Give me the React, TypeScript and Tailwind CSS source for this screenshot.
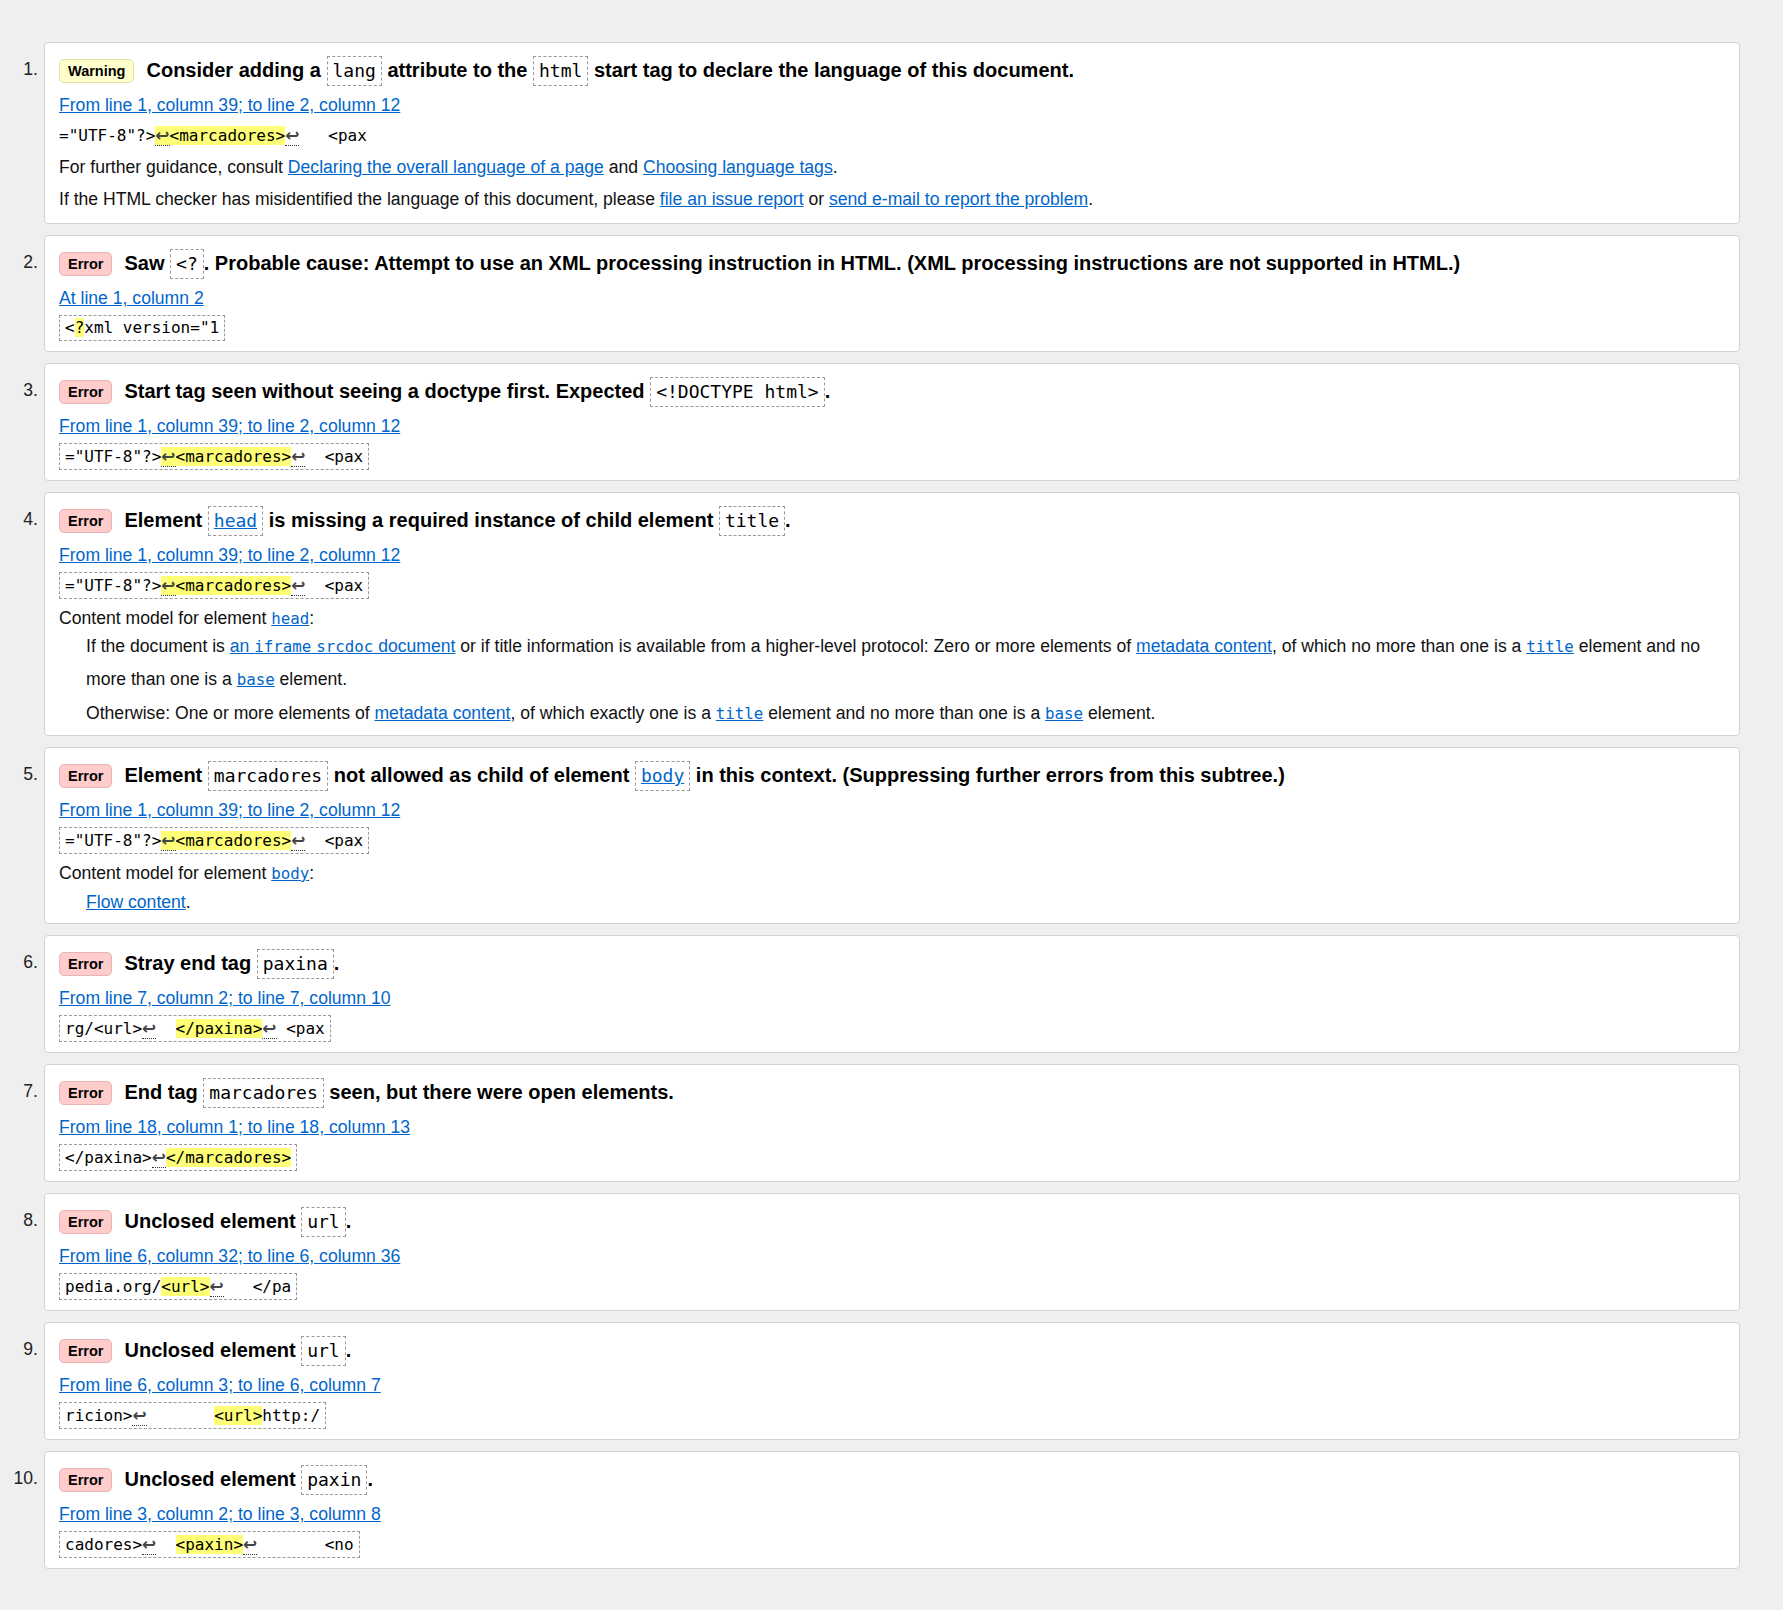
import type { ReactNode } from "react";

const sans = "font-['Liberation_Sans',Arial,sans-serif]";
const mono = "font-['DejaVu_Sans_Mono','Liberation_Mono',monospace]";
const link = "text-[#0066cc] underline";

function Badge({ kind }: { kind: "Warning" | "Error" }) {
  const tone =
    kind === "Warning"
      ? "bg-[#ffffcc] border-[#e3e3a6]"
      : "bg-[#ffcccc] border-[#eab4b4]";
  return (
    <span
      className={`inline-block align-[1px] rounded-[5px] border px-[8px] text-[14.5px] leading-[22px] font-bold text-black mr-[12px] ${tone}`}
    >
      {kind}
    </span>
  );
}

// dashed box round a tag name in a message title
function TCode({ children, href }: { children: ReactNode; href?: boolean }) {
  return (
    <code
      className={`inline-block border border-dashed border-[#9a9a9a] px-[5px] py-[2px] leading-[24px] text-[18px] font-normal ${mono} ${href ? link : "text-black"}`}
    >
      {children}
    </code>
  );
}

function Lf() {
  return (
    <span className="font-['DejaVu_Sans',sans-serif] text-[17px] font-bold text-[#444] border-b border-dotted border-[#333]">
      ↩
    </span>
  );
}

function Hl({ children }: { children: ReactNode }) {
  return <span className="bg-[#ffff77]">{children}</span>;
}

// link set in monospace (element names in prose)
function CLink({ children }: { children: ReactNode }) {
  return <a className={`${link} ${mono} text-[15.8px]`}>{children}</a>;
}

type CardProps = {
  n: number;
  kind: "Warning" | "Error";
  title: ReactNode;
  where: string;
  extract: ReactNode;
  boxed?: boolean;
  children?: ReactNode;
};

function Card({ n, kind, title, where, extract, boxed = true, children }: CardProps) {
  return (
    <li className="flex">
      <div className="w-[44px] shrink-0 pt-[12px] pr-[6px] text-right text-[17.6px] leading-[30px] text-[#222]">
        {n}.
      </div>
      <div className="flex-1 rounded-[4px] border border-[#d2d2d2] bg-white px-[14px] pt-[12px] pb-[10px]">
        <p className="text-[20px] leading-[30px] font-bold text-black">
          <Badge kind={kind} />
          {title}
        </p>
        <p className="mt-[5px] text-[17.6px] leading-[28px]">
          <a className={link}>{where}</a>
        </p>
        <div className="mt-[3px]">
          <code
            className={`inline-block text-[16px] leading-[20px] whitespace-pre text-black ${mono} ${boxed ? "border border-dashed border-[#9a9a9a] px-[5px] py-[2px]" : "py-[3px]"}`}
          >
            {extract}
          </code>
        </div>
        {children}
      </div>
    </li>
  );
}

const marcExtract = (
  <>
    ="UTF-8"?&gt;
    <Hl>
      <Lf />
      &lt;marcadores&gt;
    </Hl>
    <Lf />
    {"  "}&lt;pax
  </>
);

export default function App() {
  return (
    <div className={`min-h-screen bg-[#efefef] pt-[42px] pr-[43px] pb-[40px] text-[#111] ${sans}`}>
      <ol className="flex flex-col gap-[11px]">
        <Card
          n={1}
          kind="Warning"
          boxed={false}
          title={
            <>
              Consider adding a <TCode>lang</TCode> attribute to the <TCode>html</TCode> start tag to declare the
              language of this document.
            </>
          }
          where="From line 1, column 39; to line 2, column 12"
          extract={
            <>
              ="UTF-8"?&gt;
              <Hl>
                <Lf />
                &lt;marcadores&gt;
              </Hl>
              <Lf />
              {"   "}&lt;pax
            </>
          }
        >
          <p className="mt-[4px] text-[17.6px] leading-[28px]">
            For further guidance, consult <a className={link}>Declaring the overall language of a page</a> and{" "}
            <a className={link}>Choosing language tags</a>.
          </p>
          <p className="mt-[4px] text-[17.6px] leading-[28px]">
            If the HTML checker has misidentified the language of this document, please{" "}
            <a className={link}>file an issue report</a> or <a className={link}>send e-mail to report the problem</a>.
          </p>
        </Card>

        <Card
          n={2}
          kind="Error"
          title={
            <>
              Saw <TCode>&lt;?</TCode>. Probable cause: Attempt to use an XML processing instruction in HTML. (XML
              processing instructions are not supported in HTML.)
            </>
          }
          where="At line 1, column 2"
          extract={
            <>
              &lt;<Hl>?</Hl>xml version="1
            </>
          }
        />

        <Card
          n={3}
          kind="Error"
          title={
            <>
              Start tag seen without seeing a doctype first. Expected <TCode>&lt;!DOCTYPE html&gt;</TCode>.
            </>
          }
          where="From line 1, column 39; to line 2, column 12"
          extract={marcExtract}
        />

        <Card
          n={4}
          kind="Error"
          title={
            <>
              Element <TCode href>head</TCode> is missing a required instance of child element <TCode>title</TCode>.
            </>
          }
          where="From line 1, column 39; to line 2, column 12"
          extract={marcExtract}
        >
          <p className="mt-[5px] text-[17.6px] leading-[28px]">
            Content model for element <CLink>head</CLink>:
          </p>
          <div className="ml-[27px] mt-[-3px] mb-[-5px] text-[17.6px] leading-[32px]">
            <p>
              If the document is <a className={link}>an </a>
              <CLink>iframe</CLink>
              <a className={link}> </a>
              <CLink>srcdoc</CLink>
              <a className={link}> document</a> or if title information is available from a higher-level protocol:
              Zero or more elements of <a className={link}>metadata content</a>, of which no more than one is a{" "}
              <CLink>title</CLink> element and no
              <br />
              more than one is a <CLink>base</CLink> element.
            </p>
            <p className="mt-[1px]">
              Otherwise: One or more elements of <a className={link}>metadata content</a>, of which exactly one is a{" "}
              <CLink>title</CLink> element and no more than one is a <CLink>base</CLink> element.
            </p>
          </div>
        </Card>

        <Card
          n={5}
          kind="Error"
          title={
            <>
              Element <TCode>marcadores</TCode> not allowed as child of element <TCode href>body</TCode> in this
              context. (Suppressing further errors from this subtree.)
            </>
          }
          where="From line 1, column 39; to line 2, column 12"
          extract={marcExtract}
        >
          <p className="mt-[5px] text-[17.6px] leading-[28px]">
            Content model for element <CLink>body</CLink>:
          </p>
          <p className="ml-[27px] mb-[-3px] text-[17.6px] leading-[28px]">
            <a className={link}>Flow content</a>.
          </p>
        </Card>

        <Card
          n={6}
          kind="Error"
          title={
            <>
              Stray end tag <TCode>paxina</TCode>.
            </>
          }
          where="From line 7, column 2; to line 7, column 10"
          extract={
            <>
              rg/&lt;url&gt;
              <Lf />
              {"  "}
              <Hl>&lt;/paxina&gt;</Hl>
              <Lf />
              {" "}&lt;pax
            </>
          }
        />

        <Card
          n={7}
          kind="Error"
          title={
            <>
              End tag <TCode>marcadores</TCode> seen, but there were open elements.
            </>
          }
          where="From line 18, column 1; to line 18, column 13"
          extract={
            <>
              &lt;/paxina&gt;
              <Lf />
              <Hl>&lt;/marcadores&gt;</Hl>
            </>
          }
        />

        <Card
          n={8}
          kind="Error"
          title={
            <>
              Unclosed element <TCode>url</TCode>.
            </>
          }
          where="From line 6, column 32; to line 6, column 36"
          extract={
            <>
              pedia.org/<Hl>&lt;url&gt;</Hl>
              <Lf />
              {"   "}&lt;/pa
            </>
          }
        />

        <Card
          n={9}
          kind="Error"
          title={
            <>
              Unclosed element <TCode>url</TCode>.
            </>
          }
          where="From line 6, column 3; to line 6, column 7"
          extract={
            <>
              ricion&gt;
              <Lf />
              {"       "}
              <Hl>&lt;url&gt;</Hl>http:/
            </>
          }
        />

        <Card
          n={10}
          kind="Error"
          title={
            <>
              Unclosed element <TCode>paxin</TCode>.
            </>
          }
          where="From line 3, column 2; to line 3, column 8"
          extract={
            <>
              cadores&gt;
              <Lf />
              {"  "}
              <Hl>&lt;paxin&gt;</Hl>
              <Lf />
              {"       "}&lt;no
            </>
          }
        />
      </ol>
    </div>
  );
}
